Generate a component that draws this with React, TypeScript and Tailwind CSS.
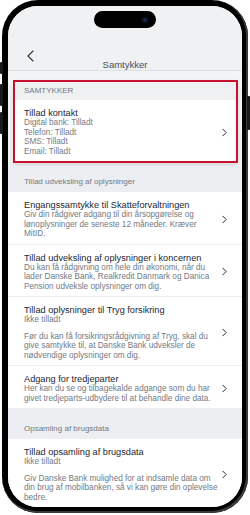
import type { ReactNode } from 'react'

type Item = {
  title: string
  status?: string
  lines: string[]
}

const EXCHANGE: Item[] = [
  {
    title: 'Engangssamtykke til Skatteforvaltningen',
    lines: [
      'Giv din rådgiver adgang til din årsopgørelse og',
      'lønoplysninger de seneste 12 måneder. Kræver',
      'MitID.',
    ],
  },
  {
    title: 'Tillad udveksling af oplysninger i koncernen',
    lines: [
      'Du kan få rådgivning om hele din økonomi, når du',
      'lader Danske Bank, Realkredit Danmark og Danica',
      'Pension udveksle oplysninger om dig.',
    ],
  },
  {
    title: 'Tillad oplysninger til Tryg forsikring',
    status: 'Ikke tilladt',
    lines: [
      'Før du kan få forsikringsrådgivning af Tryg, skal du',
      'give samtykke til, at Danske Bank udveksler de',
      'nødvendige oplysninger om dig.',
    ],
  },
  {
    title: 'Adgang for tredjeparter',
    lines: [
      'Her kan du se og tilbagekalde adgange som du har',
      'givet tredjeparts-udbydere til at behandle dine data.',
    ],
  },
]

const USAGE: Item = {
  title: 'Tillad opsamling af brugsdata',
  status: 'Ikke tilladt',
  lines: [
    'Giv Danske Bank mulighed for at indsamle data om',
    'din brug af mobilbanken, så vi kan gøre din oplevelse',
    'bedre.',
  ],
}

function Chevron() {
  return (
    <svg viewBox="0 0 6 10" className="h-[9px] w-[5px] shrink-0" fill="none" aria-hidden="true">
      <path d="M1 1l4 4-4 4" stroke="#1f2d3d" strokeWidth="1.2" strokeLinecap="round" strokeLinejoin="round" />
    </svg>
  )
}

function Row({ children, inset = false }: { children: ReactNode; inset?: boolean }) {
  return (
    <div
      className={`flex items-center gap-[6px] bg-white pt-[8px] pb-[5px] ${
        inset ? 'pl-[9px] pr-[9px]' : 'pl-[16px] pr-[15px]'
      }`}
    >
      <div className="min-w-0 flex-1">{children}</div>
      <Chevron />
    </div>
  )
}

function Title({ children }: { children: ReactNode }) {
  return <div className="whitespace-nowrap text-[9.2px] leading-[10px] text-[#1c2632]">{children}</div>
}

function Sub({ children }: { children: ReactNode }) {
  return <div className="whitespace-nowrap text-[8.2px] leading-[9.5px] text-[#727a85]">{children}</div>
}

function ConsentRow({ item }: { item: Item }) {
  return (
    <Row>
      <Title>{item.title}</Title>
      {item.status && <Sub>{item.status}</Sub>}
      <div className={item.status ? 'mt-[7px]' : ''}>
        {item.lines.map((l) => (
          <Sub key={l}>{l}</Sub>
        ))}
      </div>
    </Row>
  )
}

function SectionLabel({ children, tall = false }: { children: ReactNode; tall?: boolean }) {
  return (
    <div
      className={`flex items-end bg-[#eceef1] pb-[5px] pl-[16px] text-[8px] leading-[10px] text-[#727a85] ${
        tall ? 'h-[31px]' : 'h-[26px]'
      }`}
    >
      {children}
    </div>
  )
}

export default function App() {
  return (
    <div className="relative h-[515px] w-[250px] overflow-hidden bg-white font-['Liberation_Sans',Arial,sans-serif]">
      {/* side buttons */}
      <div className="absolute left-0 top-[62px] h-[12px] w-[3px] rounded-l-[1px] bg-[#1a1a1a]" />
      <div className="absolute left-0 top-[84px] h-[22px] w-[3px] rounded-l-[1px] bg-[#1a1a1a]" />
      <div className="absolute left-0 top-[112px] h-[22px] w-[3px] rounded-l-[1px] bg-[#1a1a1a]" />
      <div className="absolute right-0 top-[96px] h-[34px] w-[3px] rounded-r-[1px] bg-[#1a1a1a]" />

      <div className="ml-[2px] h-[513px] w-[246px] rounded-[36px] bg-black p-[6px] shadow-[inset_-1px_-1px_0_1px_#3a3a3a]">
        <div className="flex h-full flex-col overflow-hidden rounded-[30px] bg-[#f3f4f6]">
          {/* header */}
          <div className="flex flex-col border-b border-[#dcdfe3] bg-[#f0f1f3]">
            <div className="mx-auto mt-[5px] flex h-[17px] w-[62px] items-center justify-end rounded-full bg-black pr-[8px]">
              <div className="h-[6px] w-[6px] rounded-full bg-[#1b2a4a] shadow-[inset_0_0_0_1.5px_#0c1220]" />
            </div>
            <div className="ml-[19px] mt-[22px] h-[12px]">
              <svg viewBox="0 0 7 12" className="h-[12px] w-[7px]" fill="none" aria-hidden="true">
                <path d="M6 1L1 6l5 5" stroke="#2a3646" strokeWidth="1.1" strokeLinecap="round" strokeLinejoin="round" />
              </svg>
            </div>
            <div className="-mt-[3px] text-center text-[9.5px] leading-[11px] text-[#46505c]">Samtykker</div>
          </div>

          {/* content */}
          <div className="flex-1 pt-[9px]">
            <div className="ml-[5px] mr-[4px] border-2 border-[#c8102e] shadow-[0_3px_6px_rgba(0,0,0,0.12)]">
              <div className="flex h-[18px] items-center bg-[#eef0f2] pl-[9px] text-[8px] leading-[10px] text-[#727a85]">
                SAMTYKKER
              </div>
              <Row inset>
                <Title>Tillad kontakt</Title>
                <Sub>Digital bank: Tilladt</Sub>
                <Sub>Telefon: Tilladt</Sub>
                <Sub>SMS: Tilladt</Sub>
                <Sub>Email: Tilladt</Sub>
              </Row>
            </div>

            <div className="mt-[3px]">
              <SectionLabel>Tillad udveksling af oplysninger</SectionLabel>
              <div className="flex flex-col divide-y divide-[#eceef0] bg-white">
                {EXCHANGE.map((item) => (
                  <ConsentRow key={item.title} item={item} />
                ))}
              </div>
              <SectionLabel tall>Opsamling af brugsdata</SectionLabel>
              <ConsentRow item={USAGE} />
            </div>
          </div>
        </div>
      </div>
    </div>
  )
}
